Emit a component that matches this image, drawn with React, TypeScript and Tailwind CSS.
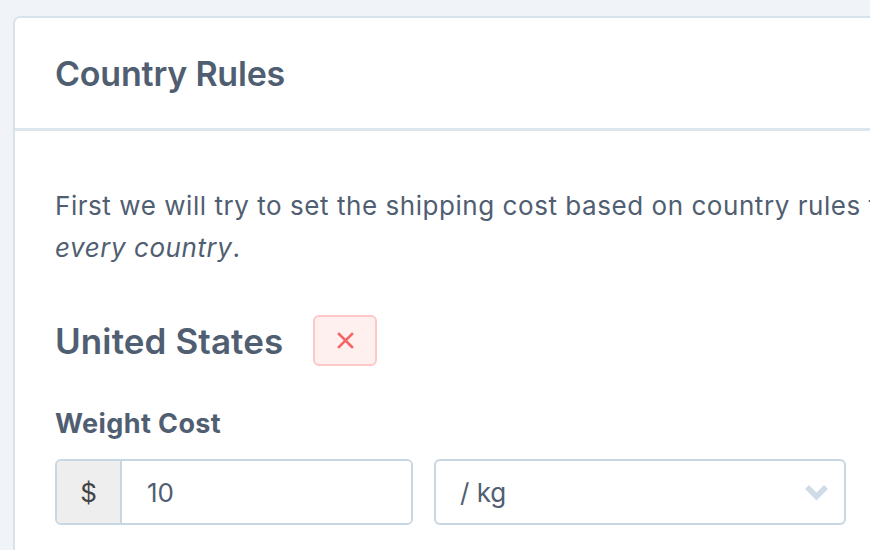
import React from "react";

export default function App() {
  return (
    <div className="h-[550px] w-[870px] overflow-hidden bg-[#f0f4f8] pl-[13px] pt-[16px] font-['Inter',sans-serif] text-[#505e72]">
      <div className="w-[920px] rounded-tl-[7px] border-2 border-[#d8e2ea] bg-white">
        {/* header */}
        <div className="flex h-[113px] items-center border-b-[3px] border-[#dce6ec] px-[40px] pt-[2px]">
          <h1 className="text-[34px] font-semibold leading-none tracking-[-0.2px]">Country Rules</h1>
        </div>

        {/* body */}
        <div className="px-[40px] pt-[54px] pb-10">
          <p className="w-[900px] text-[26px] leading-[42px] tracking-[0.55px]">
            First we will try to set the shipping cost based on country rules for <em>every country</em>.
          </p>

          <div className="mt-[46px] flex items-center gap-[30px]">
            <h2 className="text-[35px] font-semibold leading-[50px] tracking-[0.1px]">United States</h2>
            <button className="flex h-[51px] w-[64px] items-center justify-center rounded-[6px] border-2 border-[#fec8c8] bg-[#fff0f0]">
              <svg width="17" height="17" viewBox="0 0 17 17" fill="none">
                <path d="M2 2 L15 15 M15 2 L2 15" stroke="#f56565" strokeWidth="2.6" strokeLinecap="square" />
              </svg>
            </button>
          </div>

          <label className="mt-[42px] block text-[27px] font-bold leading-[32px] tracking-[0.4px]">Weight Cost</label>

          <div className="mt-[19px] flex gap-[21px]">
            <div className="flex h-[66px] w-[358px] overflow-hidden rounded-[6px] border-2 border-[#c6d6e2]">
              <span className="flex w-[65px] items-center justify-center border-r-2 border-[#c6d6e2] bg-[#eeeeee] text-[26px] text-[#444444]">
                $
              </span>
              <input
                className="min-w-0 flex-1 bg-white pl-[25px] text-[26px] text-[#505e72] outline-none"
                defaultValue="10"
              />
            </div>
            <div className="flex h-[66px] w-[412px] items-center justify-between rounded-[6px] border-2 border-[#c6d6e2] pl-[24px] pr-[15px]">
              <span className="text-[26px]">/ kg</span>
              <svg width="25" height="18" viewBox="0 0 25 18" fill="none">
                <path d="M3 4 L12.5 13.5 L22 4" stroke="#cfdce7" strokeWidth="5.5" />
              </svg>
            </div>
          </div>
        </div>
      </div>
    </div>
  );
}
